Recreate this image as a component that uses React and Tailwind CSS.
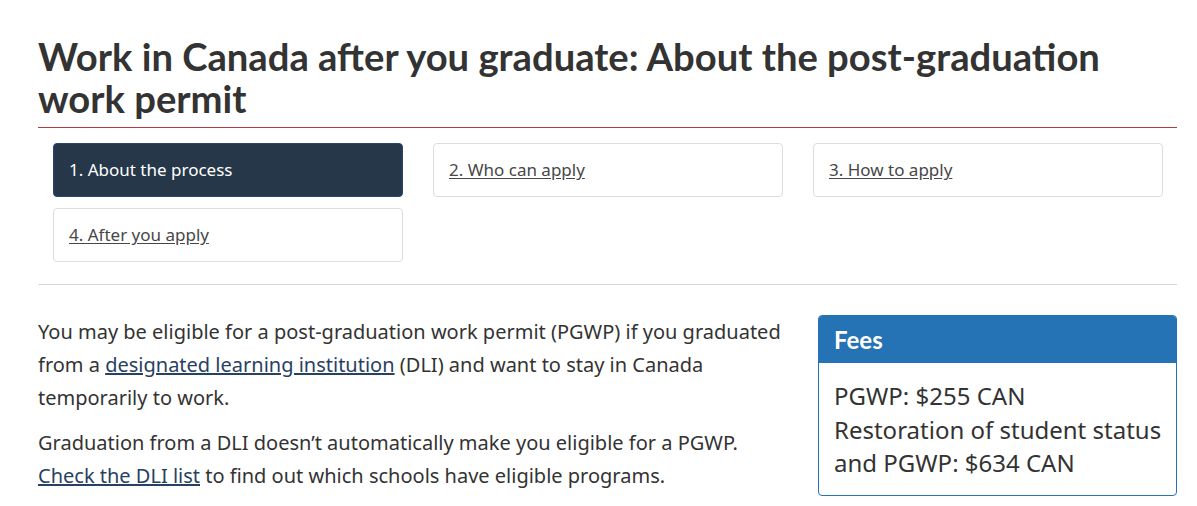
export default function App() {
  const body = { fontFamily: '"Noto Sans", sans-serif' };
  const head = { fontFamily: 'Lato, "Noto Sans", sans-serif' };
  const tabs = [
    { t: "1. About the process", active: true },
    { t: "2. Who can apply" },
    { t: "3. How to apply" },
    { t: "4. After you apply" },
  ];
  return (
    <div className="bg-white w-[1197px] h-[506px] overflow-hidden text-[#333]" style={body}>
      <div className="ml-[38px] w-[1139px]">
        <h1
          className="pt-[35px] pb-[8px] text-[38.2px] leading-[42px] font-bold text-[#333] border-b border-[#af3c43]"
          style={head}
        >
          Work in Canada after you graduate: About the post-graduation work permit
        </h1>
        <div className="grid grid-cols-3 gap-x-[30px] gap-y-[11px] px-[15px] mt-[15px] w-[1140px]">
          {tabs.map((x) =>
            x.active ? (
              <div
                key={x.t}
                className="h-[54px] flex items-center px-[15px] rounded-[4px] bg-[#26374a] border border-[#2b4380] text-white text-[17px]"
              >
                {x.t}
              </div>
            ) : (
              <div
                key={x.t}
                className="h-[54px] flex items-center px-[15px] rounded-[4px] bg-white border border-[#ddd] text-[17px]"
              >
                <a className="underline text-[#474747] underline-offset-[2px]">{x.t}</a>
              </div>
            )
          )}
        </div>
        <div className="mt-[22px] border-t border-[#d6d6d6]" />
        <div className="flex gap-[30px] mt-[30px]">
          <div className="w-[750px] text-[20px] leading-[33px]">
            <p className="mb-[12px]">
              You may be eligible for a post-graduation work permit (PGWP) if you graduated from a{" "}
              <a className="underline text-[#284162]">designated learning institution</a> (DLI) and want
              to stay in Canada temporarily to work.
            </p>
            <p>
              Graduation from a DLI doesn’t automatically make you eligible for a PGWP.{" "}
              <a className="underline text-[#284162]">Check the DLI list</a> to find out which schools have
              eligible programs.
            </p>
          </div>
          <div className="w-[359px] h-[181px] border border-[#2572b4] rounded-[4px] overflow-hidden">
            <div className="bg-[#2572b4] h-[47px] flex items-center px-[15px]">
              <span className="text-white font-bold text-[24px]" style={head}>
                Fees
              </span>
            </div>
            <div className="pl-[15px] pt-[16px] text-[24px] leading-[33.5px] text-[#333] whitespace-nowrap">
              <div>PGWP: $255 CAN</div>
              <div>Restoration of student status</div>
              <div>and PGWP: $634 CAN</div>
            </div>
          </div>
        </div>
      </div>
    </div>
  );
}
